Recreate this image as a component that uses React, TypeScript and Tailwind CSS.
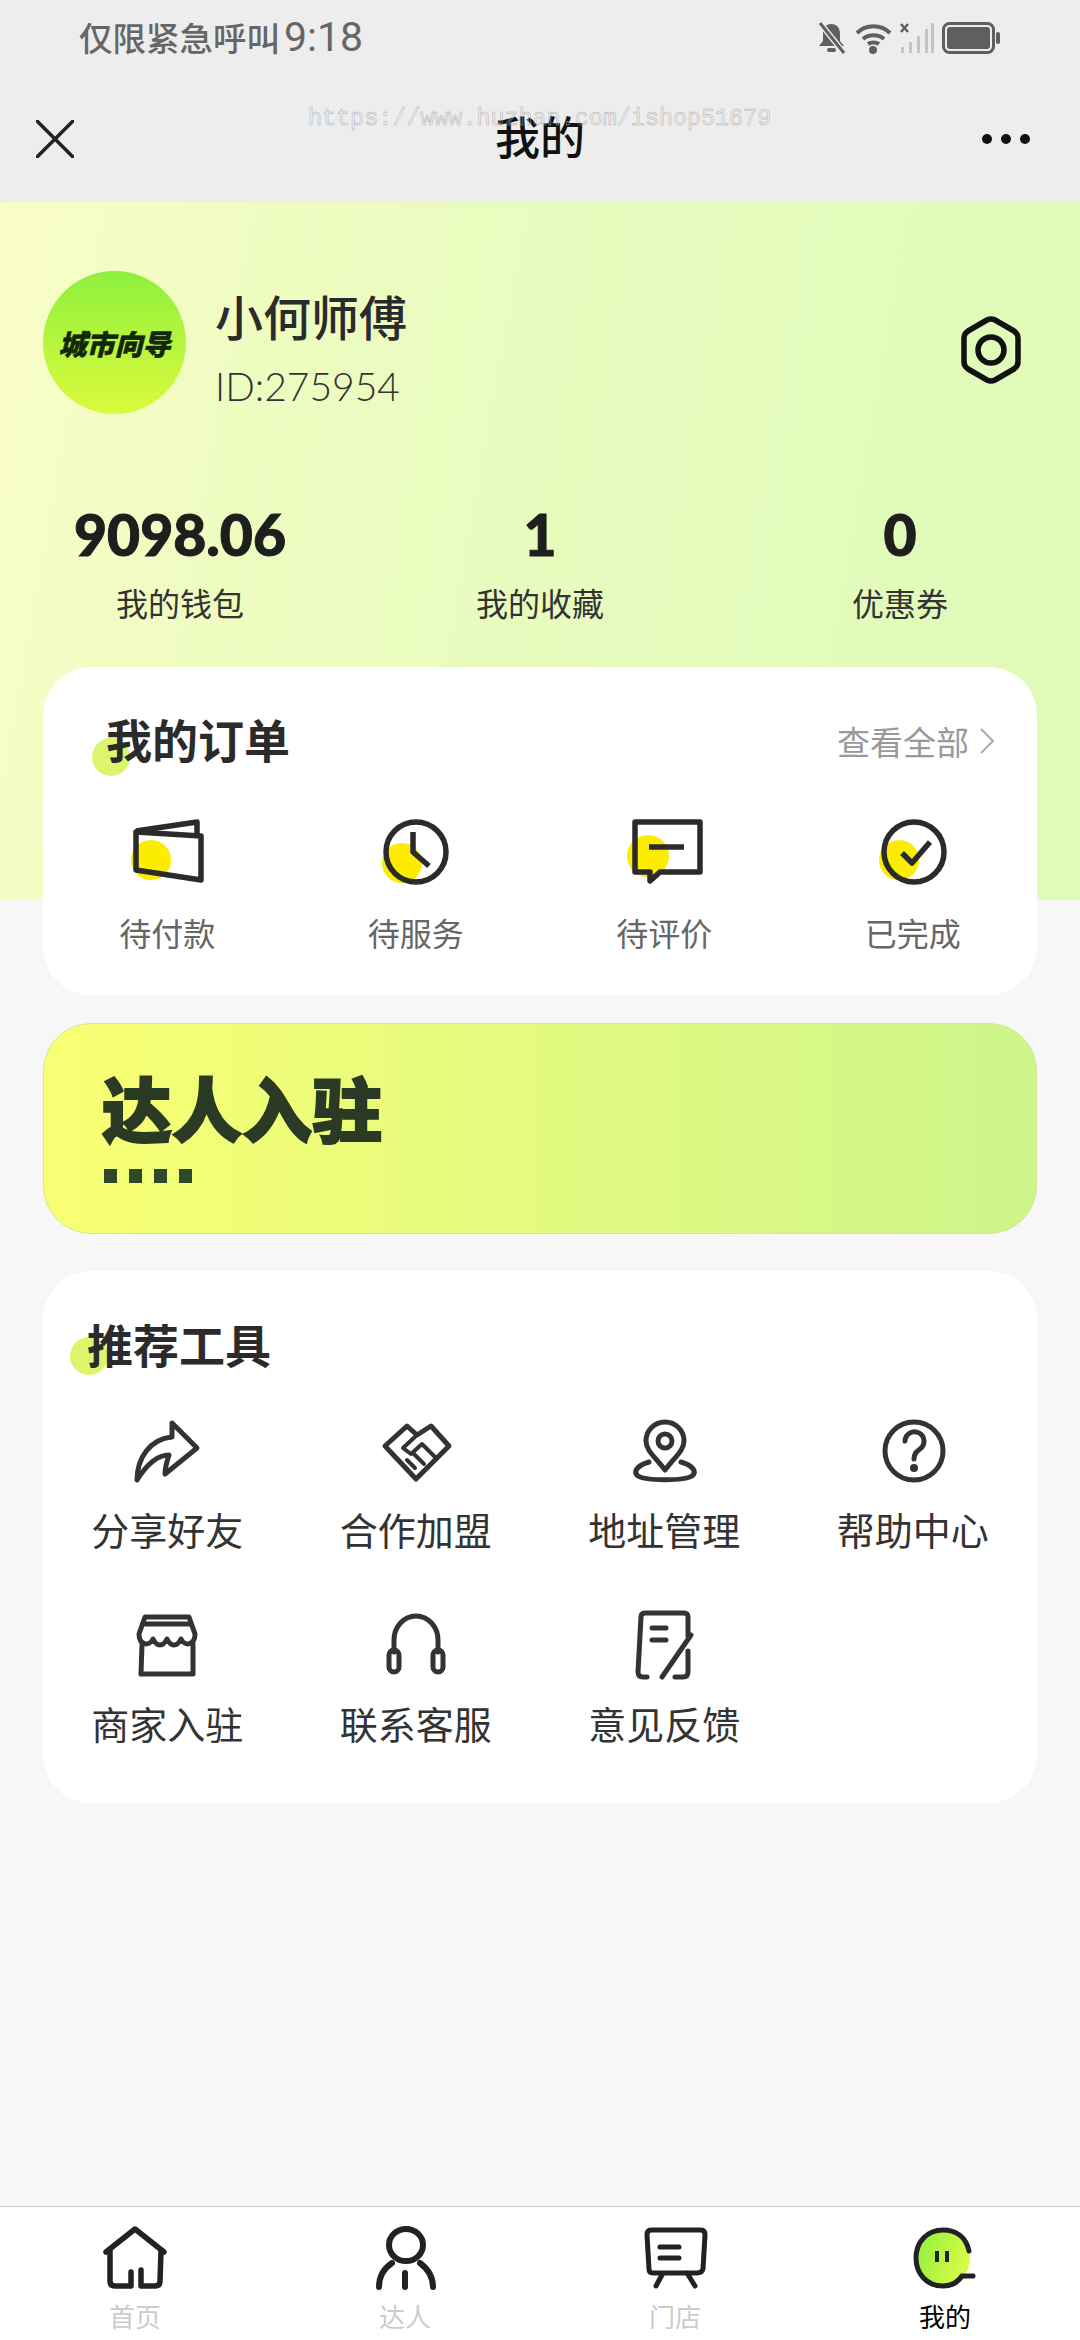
const CJK = "font-['Noto_Sans_CJK_SC',sans-serif]";

function StatusIcons() {
  return (
    <div className="flex items-center gap-[7px]">
      {/* bell off */}
      <svg className="-ml-[4px]" width="32" height="34" viewBox="0 0 32 34" fill="#5f5f5f">
        <path d="M15 3c6 0 9 4 9 10v7l4 5H3l4-5v-7c0-6 3-10 8-10z" />
        <rect x="11" y="27" width="9" height="4" rx="2" />
        <path d="M4 2l24 30" stroke="#ededed" strokeWidth="6" />
        <path d="M4 2l24 30" stroke="#5f5f5f" strokeWidth="3" />
      </svg>
      {/* wifi */}
      <svg width="37" height="32" viewBox="0 0 37 32" fill="none" stroke="#5f5f5f" strokeWidth="4">
        <path d="M2 11c9-9 24-9 33 0" />
        <path d="M8 17c6-5 15-5 21 0" />
        <path d="M13 22c3-2 8-2 11 0" />
        <circle cx="18" cy="28" r="2" fill="#5f5f5f" />
      </svg>
      {/* signal, no sim */}
      <svg width="36" height="32" viewBox="0 0 36 32">
        <path d="M2 2l7 8M9 2l-7 8" stroke="#5f5f5f" strokeWidth="2.5" />
        <rect x="2" y="25" width="3" height="6" fill="#c4c4c4" />
        <rect x="10" y="20" width="3" height="11" fill="#c4c4c4" />
        <rect x="18" y="14" width="3" height="17" fill="#c4c4c4" />
        <rect x="26" y="7" width="3" height="24" fill="#c4c4c4" />
        <rect x="32" y="1" width="3" height="30" fill="#c4c4c4" />
      </svg>
      {/* battery */}
      <svg width="58" height="32" viewBox="0 0 58 32">
        <rect x="1.5" y="1.5" width="50" height="29" rx="6" fill="none" stroke="#5f5f5f" strokeWidth="3" />
        <rect x="5" y="5" width="43" height="22" rx="3" fill="#5f5f5f" />
        <rect x="54" y="10" width="4" height="12" rx="2" fill="#5f5f5f" />
      </svg>
    </div>
  );
}

const OrderIcons = {
  wallet: (
    <svg width="80" height="80" viewBox="0 0 80 80" fill="none" stroke="#2b2b2b" strokeWidth="5.5" strokeLinejoin="round">
      <circle cx="24" cy="48" r="20" fill="#fbec00" stroke="none" />
      <path d="M9 20l65 4v44L9 58z" />
      <path d="M9 19l61-9v13" />
    </svg>
  ),
  clock: (
    <svg width="80" height="80" viewBox="0 0 80 80" fill="none" stroke="#2b2b2b" strokeWidth="5.5">
      <circle cx="26" cy="51" r="20" fill="#fbec00" stroke="none" />
      <circle cx="40" cy="40" r="30" />
      <path d="M37 20v20l16 14" strokeLinejoin="round" />
    </svg>
  ),
  comment: (
    <svg width="80" height="80" viewBox="0 0 80 80" fill="none" stroke="#2b2b2b" strokeWidth="5.5">
      <circle cx="24" cy="44" r="21" fill="#fbec00" stroke="none" />
      <path d="M11 10h65v50H36l-10 9v-9H11z" strokeLinejoin="round" />
      <path d="M25 35h35" />
    </svg>
  ),
  done: (
    <svg width="80" height="80" viewBox="0 0 80 80" fill="none" stroke="#2b2b2b" strokeWidth="5.5">
      <circle cx="26" cy="48" r="20" fill="#fbec00" stroke="none" />
      <circle cx="41" cy="40" r="30" />
      <path d="M29 41l10 10 18-21" strokeLinejoin="round" />
    </svg>
  ),
};

function ToolIcon({ children }: { children: React.ReactNode }) {
  return (
    <svg width="80" height="80" viewBox="0 0 80 80" fill="none" stroke="#333" strokeWidth="5" strokeLinecap="round" strokeLinejoin="round">
      {children}
    </svg>
  );
}

const toolIcons = {
  share: <ToolIcon><path d="M45 13l25 25-32 26c0-7 2-13 4-19-12 0-22 9-32 25 0-22 13-41 35-43z" /></ToolIcon>,
  hands: (
    <ToolIcon>
      <path d="M31 16l10 9 14-9 18 20-33 33L9 36z" />
      <path d="M41 25L27 38l8 6 11-10 13 13M31 50l8 8M38 44l10 10" strokeWidth="4" />
    </ToolIcon>
  ),
  pin: (
    <ToolIcon>
      <path d="M41 60C30 46 22 40 22 31a19 19 0 0 1 38 0c0 9-8 15-19 29z" />
      <circle cx="41" cy="31" r="7" />
      <path d="M25 52c-13 4-16 10-11 14 8 5 46 5 54 0 5-4 2-10-11-14" />
    </ToolIcon>
  ),
  help: (
    <ToolIcon>
      <circle cx="41" cy="41" r="29" />
      <path d="M32 31a9.5 9.5 0 1 1 15 8c-4 3-6 5-6 10" />
      <circle cx="41" cy="58" r="1.5" fill="#333" />
    </ToolIcon>
  ),
  store: (
    <ToolIcon>
      <path d="M18 13h44l6 17c0 11-10 13-14 5-4 8-10 8-14 0-4 8-10 8-14 0-4 8-14 6-14-5z" />
      <path d="M15 40l-1 30h52V40M17 20h46" />
    </ToolIcon>
  ),
  phones: (
    <ToolIcon>
      <path d="M18 48V36a22 24 0 0 1 44 0v12" />
      <rect x="13" y="46" width="10" height="22" rx="5" />
      <rect x="57" y="46" width="10" height="22" rx="5" />
    </ToolIcon>
  ),
  note: (
    <ToolIcon>
      <path d="M64 32V13q0-4-4-4H21q-4 0-4 4l-3 55q0 5 5 5h4" />
      <path d="M28 24h14M28 36h14M67 31L38 73M64 47v21q0 5-5 5h-8" />
    </ToolIcon>
  ),
};

const tabIcons = [
  <svg key="home" width="80" height="70" viewBox="0 0 80 70" fill="none" stroke="#222" strokeWidth="5.5" strokeLinecap="round" strokeLinejoin="round">
    <path d="M11 29L40 6l29 23" />
    <path d="M15 28v30q0 5 5 5h16V49M66 28l-1 30q0 5-5 5H46V47" />
  </svg>,
  <svg key="person" width="80" height="70" viewBox="0 0 80 70" fill="none" stroke="#222" strokeWidth="6" strokeLinecap="round">
    <ellipse cx="41" cy="22" rx="17" ry="16" />
    <path d="M27 40c-9 6-13 14-13 24M55 40c8 6 13 14 13 24M40 50v14" />
  </svg>,
  <svg key="chat" width="80" height="70" viewBox="0 0 80 70" fill="none" stroke="#222" strokeWidth="5" strokeLinecap="round" strokeLinejoin="round">
    <path d="M16 7h50q4 0 4 5l-2 34q-1 4-6 4H18q-4 0-4-4l-2-34q0-5 4-5zM28 50l-7 13M52 50l8 13" />
    <path d="M25 24h19M25 35h19" />
  </svg>,
  <svg key="mine" width="80" height="70" viewBox="0 0 80 70" fill="none">
    <defs>
      <linearGradient id="mineFill" x1="0" y1="0" x2="1" y2="0.4">
        <stop offset="0" stopColor="#8fee3e" />
        <stop offset="1" stopColor="#d6fb46" />
      </linearGradient>
    </defs>
    <ellipse cx="38" cy="35" rx="27" ry="28" fill="url(#mineFill)" />
    <path d="M64 28C61 14 51 7 38 7 22 7 11 19 11 35s11 28 27 28c9 0 15-4 19-10h11" stroke="#222" strokeWidth="5" strokeLinecap="round" />
    <path d="M32 28v11M42 28v11" stroke="#222" strokeWidth="4" />
  </svg>,
];

const orders = [
  { label: '待付款', icon: OrderIcons.wallet },
  { label: '待服务', icon: OrderIcons.clock },
  { label: '待评价', icon: OrderIcons.comment },
  { label: '已完成', icon: OrderIcons.done },
];

const tools = [
  { label: '分享好友', icon: toolIcons.share },
  { label: '合作加盟', icon: toolIcons.hands },
  { label: '地址管理', icon: toolIcons.pin },
  { label: '帮助中心', icon: toolIcons.help },
  { label: '商家入驻', icon: toolIcons.store },
  { label: '联系客服', icon: toolIcons.phones },
  { label: '意见反馈', icon: toolIcons.note },
];

const stats = [
  { value: '9098.06', label: '我的钱包' },
  { value: '1', label: '我的收藏' },
  { value: '0', label: '优惠券' },
];

const tabs = ['首页', '达人', '门店', '我的'];

export default function App() {
  return (
    <div className={`w-[1080px] h-[2340px] flex flex-col bg-[#f7f7f7] overflow-hidden ${CJK}`}>
      {/* Status bar + nav */}
      <header className="relative h-[202px] shrink-0 bg-[#ededed]">
        <div className="h-[75px] flex items-center justify-between pl-[79px] pr-[80px]">
          <span className="flex items-center leading-none text-[#666] font-medium">
            <span className="mb-[2px] text-[33.5px]">仅限紧急呼叫</span>
            <span className="ml-[4px] text-[41px] font-normal font-['Roboto',sans-serif]">9:18</span>
          </span>
          <StatusIcons />
        </div>
        <div className="h-[127px] grid grid-cols-[1fr_auto_1fr] items-center px-[36px]">
          <svg width="38" height="38" viewBox="0 0 38 38" stroke="#222" strokeWidth="3.5" strokeLinecap="round">
            <path d="M1 1l36 36M37 1L1 37" />
          </svg>
          <span className="mb-[6px] text-[45px] leading-none font-medium text-[#111]">我的</span>
          <div className="flex justify-end gap-[9px] mr-[14px]">
            <i className="w-[10px] h-[10px] rounded-full bg-[#111]" />
            <i className="w-[10px] h-[10px] rounded-full bg-[#111]" />
            <i className="w-[10px] h-[10px] rounded-full bg-[#111]" />
          </div>
        </div>
        <span className="absolute left-[308px] top-[105px] text-[23.4px] leading-[28px] text-transparent [-webkit-text-stroke:0.5px_#b0b0b0] font-['Liberation_Mono',monospace] whitespace-nowrap">
          https://www.huzhan.com/ishop51679
        </span>
      </header>

      {/* Page */}
      <main className="flex-1 bg-[linear-gradient(100deg,#f9fdc8_0%,#eefcc0_25%,#e5fbbd_60%,#dffbb8_100%)] bg-no-repeat bg-[length:100%_698px]">
        <div className="pt-[69px] pl-[43px] pr-[56px] flex items-center">
          <div className="w-[143px] h-[143px] rounded-full bg-gradient-to-b from-[#8cf03e] to-[#dafa3c] flex items-center justify-center">
            <span className="text-[28px] leading-none font-black italic text-[#14260a] whitespace-nowrap [-webkit-text-stroke:0.5px_#14260a]">城市向导</span>
          </div>
          <div className="ml-[29px] self-start mt-[14px] flex flex-col">
            <span className="text-[48px] leading-[60px] font-medium text-[#2b2b2b]">小何师傅</span>
            <span className="mt-[18px] text-[39px] leading-[46px] font-light text-[#333] font-['Lato',sans-serif]">ID:275954</span>
          </div>
          <svg className="ml-auto mt-[14px]" width="66" height="70" viewBox="0 0 66 70" fill="none" stroke="#111" strokeWidth="5.5" strokeLinejoin="round">
            <path d="M29 5q4-2 8 0l19 11q4 3 4 7v24q0 4-4 7L37 65q-4 2-8 0L10 54q-4-3-4-7V23q0-4 4-7z" />
            <circle cx="33" cy="35" r="13" />
          </svg>
        </div>

        <div className="mt-[90px] grid grid-cols-3">
          {stats.map((s) => (
            <div key={s.label} className="flex flex-col items-center">
              <span className="text-[57px] leading-[60px] font-black text-[#1e1e1e] font-['Lato',sans-serif] [-webkit-text-stroke:1px_#1e1e1e]">{s.value}</span>
              <span className="mt-[18px] mb-[1px] text-[32px] leading-[40px] text-[#333]">{s.label}</span>
            </div>
          ))}
        </div>

        {/* Orders */}
        <section className="mt-[44px] mx-[43px] h-[328px] rounded-[48px] bg-white pt-[44px]">
          <div className="flex items-center justify-between pl-[63px] pr-[42px]">
            <h2 className="relative -top-[3px] text-[46px] leading-[60px] font-bold text-[#2b2b2b]">
              <i className="absolute left-[-14px] top-[30px] w-[38px] h-[38px] rounded-full bg-[#dcf56c]" />
              <span className="relative">我的订单</span>
            </h2>
            <div className="flex items-center gap-[10px] text-[33px] leading-[40px] text-[#999]">
              查看全部
              <svg width="16" height="28" viewBox="0 0 16 28" fill="none" stroke="#aaa" strokeWidth="2">
                <path d="M2 2l12 12L2 26" />
              </svg>
            </div>
          </div>
          <div className="mt-[41px] grid grid-cols-4">
            {orders.map((o) => (
              <div key={o.label} className="flex flex-col items-center">
                {o.icon}
                <span className="mt-[20px] text-[32px] leading-[40px] text-[#666]">{o.label}</span>
              </div>
            ))}
          </div>
        </section>

        {/* Banner */}
        <section className="mt-[28px] mx-[43px] h-[211px] rounded-[48px] border border-[#d3e88a] bg-gradient-to-r from-[#f9ff72] to-[#cdf58a] pl-[58px] pt-[43px]">
          <div className="text-[70px] leading-[80px] font-black text-[#2a3a24] [-webkit-text-stroke:2px_#2a3a24]">达人入驻</div>
          <div className="mt-[22px] ml-[2px] flex gap-[12px]">
            <i className="w-[13px] h-[14px] bg-[#2f4a2a]" />
            <i className="w-[13px] h-[14px] bg-[#2f4a2a]" />
            <i className="w-[13px] h-[14px] bg-[#2f4a2a]" />
            <i className="w-[13px] h-[14px] bg-[#2f4a2a]" />
          </div>
        </section>

        {/* Tools */}
        <section className="mt-[37px] mx-[43px] h-[532px] rounded-[48px] bg-white pt-[44px]">
          <h2 className="relative -top-[2px] w-fit ml-[44px] text-[46px] leading-[60px] font-bold text-[#2b2b2b]">
            <i className="absolute left-[-17px] top-[24px] w-[38px] h-[38px] rounded-full bg-[#dcf56c]" />
            <span className="relative">推荐工具</span>
          </h2>
          <div className="mt-[35px] grid grid-cols-4 gap-y-[52px]">
            {tools.map((t) => (
              <div key={t.label} className="flex flex-col items-center">
                {t.icon}
                <span className="mt-[16px] text-[38px] leading-[46px] text-[#333]">{t.label}</span>
              </div>
            ))}
          </div>
        </section>
      </main>

      {/* Tab bar */}
      <nav className="h-[134px] shrink-0 border-t border-[#c8c8c8] bg-white grid grid-cols-4 pt-[16px]">
        {tabs.map((t, i) => (
          <div key={t} className="flex flex-col items-center">
            {tabIcons[i]}
            <span className={`mt-[8px] text-[26px] leading-[30px] ${i === 3 ? 'text-black' : 'text-[#ccc]'}`}>{t}</span>
          </div>
        ))}
      </nav>
    </div>
  );
}
